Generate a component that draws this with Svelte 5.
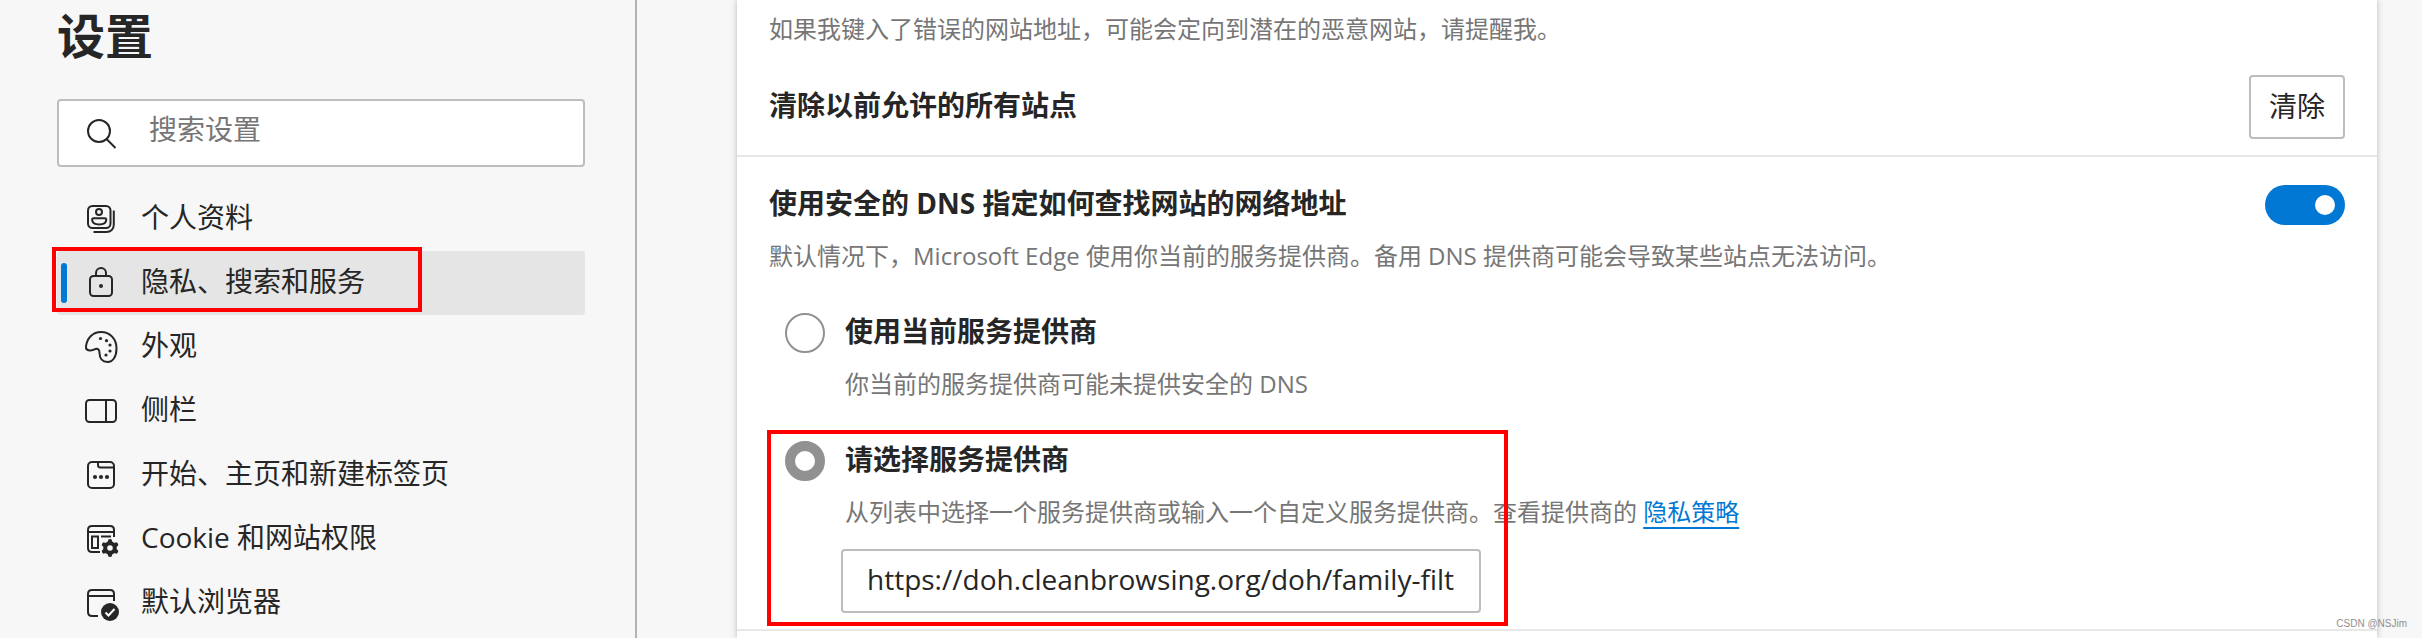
<script lang="ts">
  type IconName =
    | "profile"
    | "lock"
    | "palette"
    | "sidebar"
    | "tab"
    | "permissions"
    | "browser";

  interface NavItem {
    icon: IconName;
    label: string;
    highlighted?: boolean;
  }

  const navItems: NavItem[] = [
    { icon: "profile", label: "个人资料" },
    { icon: "lock", label: "隐私、搜索和服务", highlighted: true },
    { icon: "palette", label: "外观" },
    { icon: "sidebar", label: "侧栏" },
    { icon: "tab", label: "开始、主页和新建标签页" },
    { icon: "permissions", label: "Cookie 和网站权限" },
    { icon: "browser", label: "默认浏览器" },
  ];

  const gearTeeth = [0, 60, 120, 180, 240, 300];

  let selected: IconName = "lock";
  let query = "";
  let secureDns = true;
  let providerMode = "custom";
  let providerUrl = "https://doh.cleanbrowsing.org/doh/family-filter/";
</script>

<div class="page">
  <aside class="sidebar">
    <h1 class="title">设置</h1>

    <label class="search">
      <svg class="search-icon" viewBox="0 0 32 32" aria-hidden="true">
        <circle cx="14" cy="14" r="11" />
        <path d="M21.5 22 30.5 31" />
      </svg>
      <input
        class="search-input"
        type="text"
        placeholder="搜索设置"
        aria-label="搜索设置"
        bind:value={query}
      />
    </label>

    <nav class="nav">
      {#each navItems as item}
        <a
          class="nav-item"
          class:selected={selected === item.icon}
          href={`#${item.icon}`}
          on:click={() => (selected = item.icon)}
        >
          <svg class="nav-icon" viewBox="0 0 32 32" aria-hidden="true">
            {#if item.icon === "profile"}
              <rect x="3" y="3" width="22.5" height="22" rx="4.5" />
              <circle cx="14" cy="9" r="3" />
              <path d="M8.5 15.2h11.4c.9 0 1.4.6 1.4 1.4 0 3-2.8 4.9-7.1 4.9s-7.1-1.9-7.1-4.9c0-.8.5-1.4 1.4-1.4z" />
              <path d="M28.8 7.5v14c0 4.7-3 7.5-7.5 7.5H8.5" />
            {:else if item.icon === "lock"}
              <rect x="5" y="9" width="22" height="20" rx="3.5" />
              <path d="M11 9V6a5 5 0 0 1 10 0v3" />
              <circle class="solid" cx="16" cy="19" r="2" />
            {:else if item.icon === "palette"}
              <path d="M1 15.5C2 7 8 1 16 1c9 0 15.5 7 15.5 16.5C31.5 25.5 28 31 22.5 31c-5 0-7.8-3.5-8-9 0-3.5-1.5-4.7-4-4-2 .6-3.5 1.8-6 1.5C2 19.2.8 17.7 1 15.5z" />
              <circle class="solid" cx="15.5" cy="7.5" r="1.6" />
              <circle class="solid" cx="21.5" cy="9.7" r="1.6" />
              <circle class="solid" cx="25" cy="14" r="1.6" />
              <circle class="solid" cx="25" cy="20" r="1.6" />
              <circle class="solid" cx="21" cy="24" r="1.6" />
            {:else if item.icon === "sidebar"}
              <rect x="1" y="5" width="30" height="22" rx="3.5" />
              <path d="M21 5v22" />
            {:else if item.icon === "tab"}
              <rect x="3" y="3" width="26" height="26" rx="4" />
              <path d="M13 3v3c0 1.8.8 2.6 2.5 2.6H29" />
              <circle class="solid" cx="10" cy="18" r="2.1" />
              <circle class="solid" cx="16" cy="18" r="2.1" />
              <circle class="solid" cx="22" cy="18" r="2.1" />
            {:else if item.icon === "permissions"}
              <path d="M29 14V7c0-2.500-1.500-4-4-4H7C4.500 3 3 4.500 3 7v18c0 2.500 1.500 4 4 4h8M3 9h26M16 13.500h10" />
              <rect x="7" y="13.5" width="6" height="11.5" />
              <g transform="translate(25 25)">
                <circle class="gear" r="4.8" />
                {#each gearTeeth as angle}
                  <path
                    class="solid"
                    d="M-2.5-5-1.7-8.6Q0-9.4 1.7-8.6L2.5-5z"
                    transform={`rotate(${angle})`}
                  />
                {/each}
              </g>
            {:else}
              <path d="M29 14V7c0-2.500-1.500-4-4-4H7C4.500 3 3 4.500 3 7v18c0 2.500 1.500 4 4 4h6M3 9h26" />
              <circle class="solid" cx="25" cy="25" r="9" />
              <path class="check" d="m20.5 25.5 3 3 6-6.5" />
            {/if}
          </svg>
          <span class="nav-label">{item.label}</span>
          {#if item.highlighted}
            <span class="mark mark-nav"></span>
          {/if}
        </a>
      {/each}
    </nav>
  </aside>

  <main class="main">
    <div class="card">
      <section class="section typo">
        <p class="description">
          如果我键入了错误的网站地址，可能会定向到潜在的恶意网站，请提醒我。
        </p>
        <div class="row clear-row">
          <h2 class="heading">清除以前允许的所有站点</h2>
          <button class="btn" type="button">清除</button>
        </div>
      </section>

      <section class="section dns">
        <div class="row">
          <label class="heading" for="secure-dns">
            使用安全的 DNS 指定如何查找网站的网络地址
          </label>
          <input
            id="secure-dns"
            class="toggle"
            type="checkbox"
            role="switch"
            bind:checked={secureDns}
          />
        </div>
        <p class="description dns-description">
          默认情况下，Microsoft Edge 使用你当前的服务提供商。备用 DNS 提供商可能会导致某些站点无法访问。
        </p>

        <div class="option">
          <input
            id="provider-current"
            class="radio"
            type="radio"
            value="current"
            bind:group={providerMode}
          />
          <div class="option-body">
            <label class="heading option-label" for="provider-current">
              使用当前服务提供商
            </label>
            <p class="description">你当前的服务提供商可能未提供安全的 DNS</p>
          </div>
        </div>

        <div class="option">
          <input
            id="provider-custom"
            class="radio"
            type="radio"
            value="custom"
            bind:group={providerMode}
          />
          <div class="option-body">
            <label class="heading option-label" for="provider-custom">
              请选择服务提供商
            </label>
            <p class="description">
              从列表中选择一个服务提供商或输入一个自定义服务提供商。查看提供商的
              <a class="link" href="#policy">隐私策略</a>
            </p>
            <input
              class="provider-input"
              type="text"
              aria-label="请选择服务提供商"
              bind:value={providerUrl}
            />
          </div>
          <span class="mark mark-provider"></span>
        </div>
      </section>
    </div>
  </main>

  <span class="watermark">CSDN @NSJim</span>
</div>

<style>
  :global(body) {
    background: #f7f7f7;
  }

  .page {
    position: relative;
    box-sizing: border-box;
    min-height: 100vh;
    display: flex;
    color: #262626;
    font-family: "Open Sans", "Noto Sans CJK SC", sans-serif;
    font-size: 28px;
    line-height: 36px;
  }

  h1,
  h2,
  p {
    margin: 0;
  }

  input,
  button {
    box-sizing: border-box;
    margin: 0;
    color: inherit;
    font: inherit;
  }

  .sidebar {
    box-sizing: border-box;
    flex: none;
    width: 637px;
    padding: 6px 50px 0 57px;
    border-right: 2px solid #b3b3b3;
  }

  .title {
    font-size: 48px;
    line-height: 60px;
    font-weight: 700;
  }

  .search {
    box-sizing: border-box;
    display: flex;
    align-items: center;
    gap: 32px;
    height: 68px;
    margin: 33px 0 20px;
    padding: 0 28px 0 26px;
    border: 2px solid #bdbdbd;
    border-radius: 4px;
    background: #fff;
  }

  .search-icon {
    flex: none;
    width: 32px;
    height: 32px;
    fill: none;
    stroke: #262626;
    stroke-width: 2;
  }

  .search-input {
    flex: 1;
    min-width: 0;
    height: 60px;
    padding: 0 0 8px;
    border: 0;
    outline: 0;
    background: transparent;
  }

  .search-input::placeholder {
    color: #767676;
    opacity: 1;
  }

  .nav {
    display: flex;
    flex-direction: column;
  }

  .nav-item {
    position: relative;
    display: flex;
    align-items: center;
    gap: 24px;
    height: 64px;
    padding-left: 28px;
    border-radius: 4px;
    color: inherit;
    text-decoration: none;
  }

  .nav-item.selected {
    background: #e5e5e5;
  }

  .nav-item.selected::before {
    content: "";
    position: absolute;
    left: 4px;
    top: 12px;
    width: 6px;
    height: 40px;
    border-radius: 3px;
    background: #0078d4;
  }

  .nav-icon {
    flex: none;
    width: 32px;
    height: 32px;
    overflow: visible;
    fill: none;
    stroke: #262626;
    stroke-width: 2;
  }

  .nav-icon .solid {
    fill: #262626;
    stroke: none;
  }

  .nav-icon .gear {
    stroke-width: 4;
  }

  .nav-icon .check {
    stroke: #fff;
  }

  .nav-label {
    padding-bottom: 4px;
  }

  .main {
    flex: 1;
    min-width: 0;
    display: flex;
    padding: 0 45px 0 100px;
  }

  .card {
    flex: 1;
    min-width: 0;
    background: #fff;
    box-shadow: 0 0 6px rgba(0, 0, 0, 0.25);
  }

  .section {
    padding: 0 32px 16px;
    border-bottom: 2px solid #e8e8e8;
  }

  .typo {
    padding-top: 14px;
  }

  .dns {
    padding-top: 28px;
  }

  .row {
    display: flex;
    align-items: center;
    justify-content: space-between;
  }

  .clear-row {
    margin-top: 29px;
  }

  .heading {
    padding-bottom: 4px;
    font-size: 28px;
    line-height: 36px;
    font-weight: 700;
  }

  .description {
    padding-bottom: 2px;
    color: #767676;
    font-size: 24px;
    line-height: 30px;
  }

  .dns-description {
    margin-top: 16px;
  }

  .btn {
    height: 64px;
    padding: 0 18px 2px;
    border: 2px solid #bdbdbd;
    border-radius: 4px;
    background: #fff;
  }

  .toggle {
    appearance: none;
    display: flex;
    align-items: center;
    width: 80px;
    height: 40px;
    padding: 0 10px;
    border-radius: 20px;
    background: #8f8f8f;
  }

  .toggle::before {
    content: "";
    width: 20px;
    height: 20px;
    border-radius: 50%;
    background: #fff;
  }

  .toggle:checked {
    justify-content: flex-end;
    background: #0078d4;
  }

  .option {
    position: relative;
    display: flex;
    gap: 20px;
    margin-top: 40px;
    padding-left: 16px;
  }

  .radio {
    appearance: none;
    flex: none;
    width: 40px;
    height: 40px;
    border: 2px solid #919191;
    border-radius: 50%;
    background: #fff;
  }

  .radio:checked {
    border-width: 10px;
  }

  .option-body {
    flex: 1;
    min-width: 0;
  }

  .option-label {
    display: block;
    margin-bottom: 16px;
  }

  .link {
    color: #0078d4;
    text-decoration: underline;
    text-decoration-thickness: 2px;
    text-underline-offset: 6px;
  }

  .provider-input {
    display: block;
    width: 640px;
    height: 64px;
    margin: 20px 0 0 -4px;
    padding: 0 24px 4px;
    border: 2px solid #bdbdbd;
    border-radius: 4px;
    outline: 0;
    background: #fff;
  }

  /* red rectangles drawn over the settings to point at them */
  .mark {
    position: absolute;
    box-sizing: border-box;
    border: 4px solid #f00;
    pointer-events: none;
  }

  .mark-nav {
    left: -5px;
    top: -4px;
    width: 370px;
    height: 65px;
  }

  .mark-provider {
    left: -2px;
    top: -11px;
    width: 741px;
    height: 196px;
  }

  .watermark {
    position: absolute;
    right: 15px;
    bottom: 6px;
    color: #8f8f8f;
    font-family: "Liberation Sans", Arial, sans-serif;
    font-size: 10px;
    line-height: 16px;
  }
</style>
